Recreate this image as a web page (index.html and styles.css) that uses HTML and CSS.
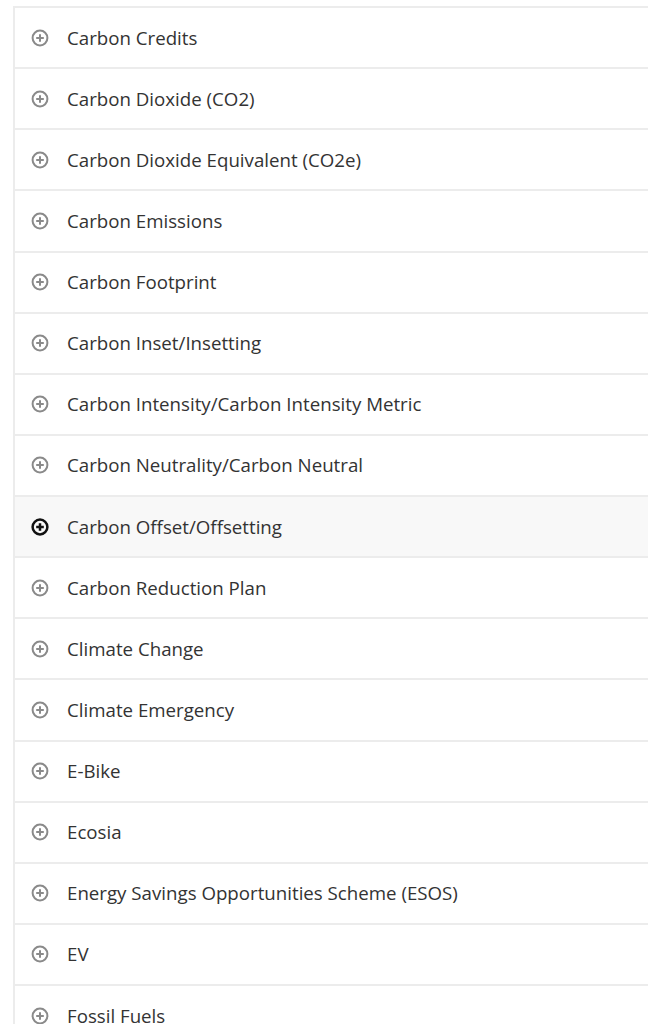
FILE: index.html
```html
<!DOCTYPE html>
<html lang="en">
<head>
<meta charset="utf-8">
<title>Glossary</title>
<link rel="stylesheet" href="styles.css">
</head>
<body>
<div class="accordion">
  <div class="item"><span class="icon"><svg viewBox="0 0 18 18"><circle cx="9" cy="9" r="7.4"/><path d="M9 5.2v7.6M5.2 9h7.6"/></svg></span><span class="label">Carbon Credits</span></div>
  <div class="item"><span class="icon"><svg viewBox="0 0 18 18"><circle cx="9" cy="9" r="7.4"/><path d="M9 5.2v7.6M5.2 9h7.6"/></svg></span><span class="label">Carbon Dioxide (CO2)</span></div>
  <div class="item"><span class="icon"><svg viewBox="0 0 18 18"><circle cx="9" cy="9" r="7.4"/><path d="M9 5.2v7.6M5.2 9h7.6"/></svg></span><span class="label">Carbon Dioxide Equivalent (CO2e)</span></div>
  <div class="item"><span class="icon"><svg viewBox="0 0 18 18"><circle cx="9" cy="9" r="7.4"/><path d="M9 5.2v7.6M5.2 9h7.6"/></svg></span><span class="label">Carbon Emissions</span></div>
  <div class="item"><span class="icon"><svg viewBox="0 0 18 18"><circle cx="9" cy="9" r="7.4"/><path d="M9 5.2v7.6M5.2 9h7.6"/></svg></span><span class="label">Carbon Footprint</span></div>
  <div class="item"><span class="icon"><svg viewBox="0 0 18 18"><circle cx="9" cy="9" r="7.4"/><path d="M9 5.2v7.6M5.2 9h7.6"/></svg></span><span class="label">Carbon Inset/Insetting</span></div>
  <div class="item"><span class="icon"><svg viewBox="0 0 18 18"><circle cx="9" cy="9" r="7.4"/><path d="M9 5.2v7.6M5.2 9h7.6"/></svg></span><span class="label">Carbon Intensity/Carbon Intensity Metric</span></div>
  <div class="item"><span class="icon"><svg viewBox="0 0 18 18"><circle cx="9" cy="9" r="7.4"/><path d="M9 5.2v7.6M5.2 9h7.6"/></svg></span><span class="label">Carbon Neutrality/Carbon Neutral</span></div>
  <div class="item is-hover"><span class="icon"><svg viewBox="0 0 18 18"><circle cx="9" cy="9" r="7.4"/><path d="M9 5.2v7.6M5.2 9h7.6"/></svg></span><span class="label">Carbon Offset/Offsetting</span></div>
  <div class="item"><span class="icon"><svg viewBox="0 0 18 18"><circle cx="9" cy="9" r="7.4"/><path d="M9 5.2v7.6M5.2 9h7.6"/></svg></span><span class="label">Carbon Reduction Plan</span></div>
  <div class="item"><span class="icon"><svg viewBox="0 0 18 18"><circle cx="9" cy="9" r="7.4"/><path d="M9 5.2v7.6M5.2 9h7.6"/></svg></span><span class="label">Climate Change</span></div>
  <div class="item"><span class="icon"><svg viewBox="0 0 18 18"><circle cx="9" cy="9" r="7.4"/><path d="M9 5.2v7.6M5.2 9h7.6"/></svg></span><span class="label">Climate Emergency</span></div>
  <div class="item"><span class="icon"><svg viewBox="0 0 18 18"><circle cx="9" cy="9" r="7.4"/><path d="M9 5.2v7.6M5.2 9h7.6"/></svg></span><span class="label">E-Bike</span></div>
  <div class="item"><span class="icon"><svg viewBox="0 0 18 18"><circle cx="9" cy="9" r="7.4"/><path d="M9 5.2v7.6M5.2 9h7.6"/></svg></span><span class="label">Ecosia</span></div>
  <div class="item"><span class="icon"><svg viewBox="0 0 18 18"><circle cx="9" cy="9" r="7.4"/><path d="M9 5.2v7.6M5.2 9h7.6"/></svg></span><span class="label">Energy Savings Opportunities Scheme (ESOS)</span></div>
  <div class="item"><span class="icon"><svg viewBox="0 0 18 18"><circle cx="9" cy="9" r="7.4"/><path d="M9 5.2v7.6M5.2 9h7.6"/></svg></span><span class="label">EV</span></div>
  <div class="item"><span class="icon"><svg viewBox="0 0 18 18"><circle cx="9" cy="9" r="7.4"/><path d="M9 5.2v7.6M5.2 9h7.6"/></svg></span><span class="label">Fossil Fuels</span></div>
</div>
</body>
</html>
```
FILE: styles.css
```css
html, body {
  margin: 0;
  padding: 0;
  background: #ffffff;
}

body {
  padding: 6px 0 0 13px;
  font-family: "Open Sans", "Liberation Sans", sans-serif;
  color: #333333;
}

.accordion {
  border-top: 2px solid #ececec;
  border-left: 2px solid #ececec;
}

.item {
  display: flex;
  align-items: center;
  gap: 18px;
  height: 59.125px;
  padding-left: 16px;
  border-bottom: 2px solid #ececec;
  box-sizing: content-box;
}

.item.is-hover {
  background: #f8f8f8;
}

.icon {
  display: flex;
  width: 18px;
  height: 18px;
  flex: none;
}

.icon svg {
  width: 18px;
  height: 18px;
  fill: none;
  stroke: #8a8a8a;
  stroke-width: 2;
  stroke-linecap: butt;
}

.is-hover .icon svg {
  stroke: #111111;
  stroke-width: 2.5;
}

.label {
  font-size: 18.7px;
  line-height: 24px;
  letter-spacing: 0;
  font-variant-ligatures: none;
}
```
